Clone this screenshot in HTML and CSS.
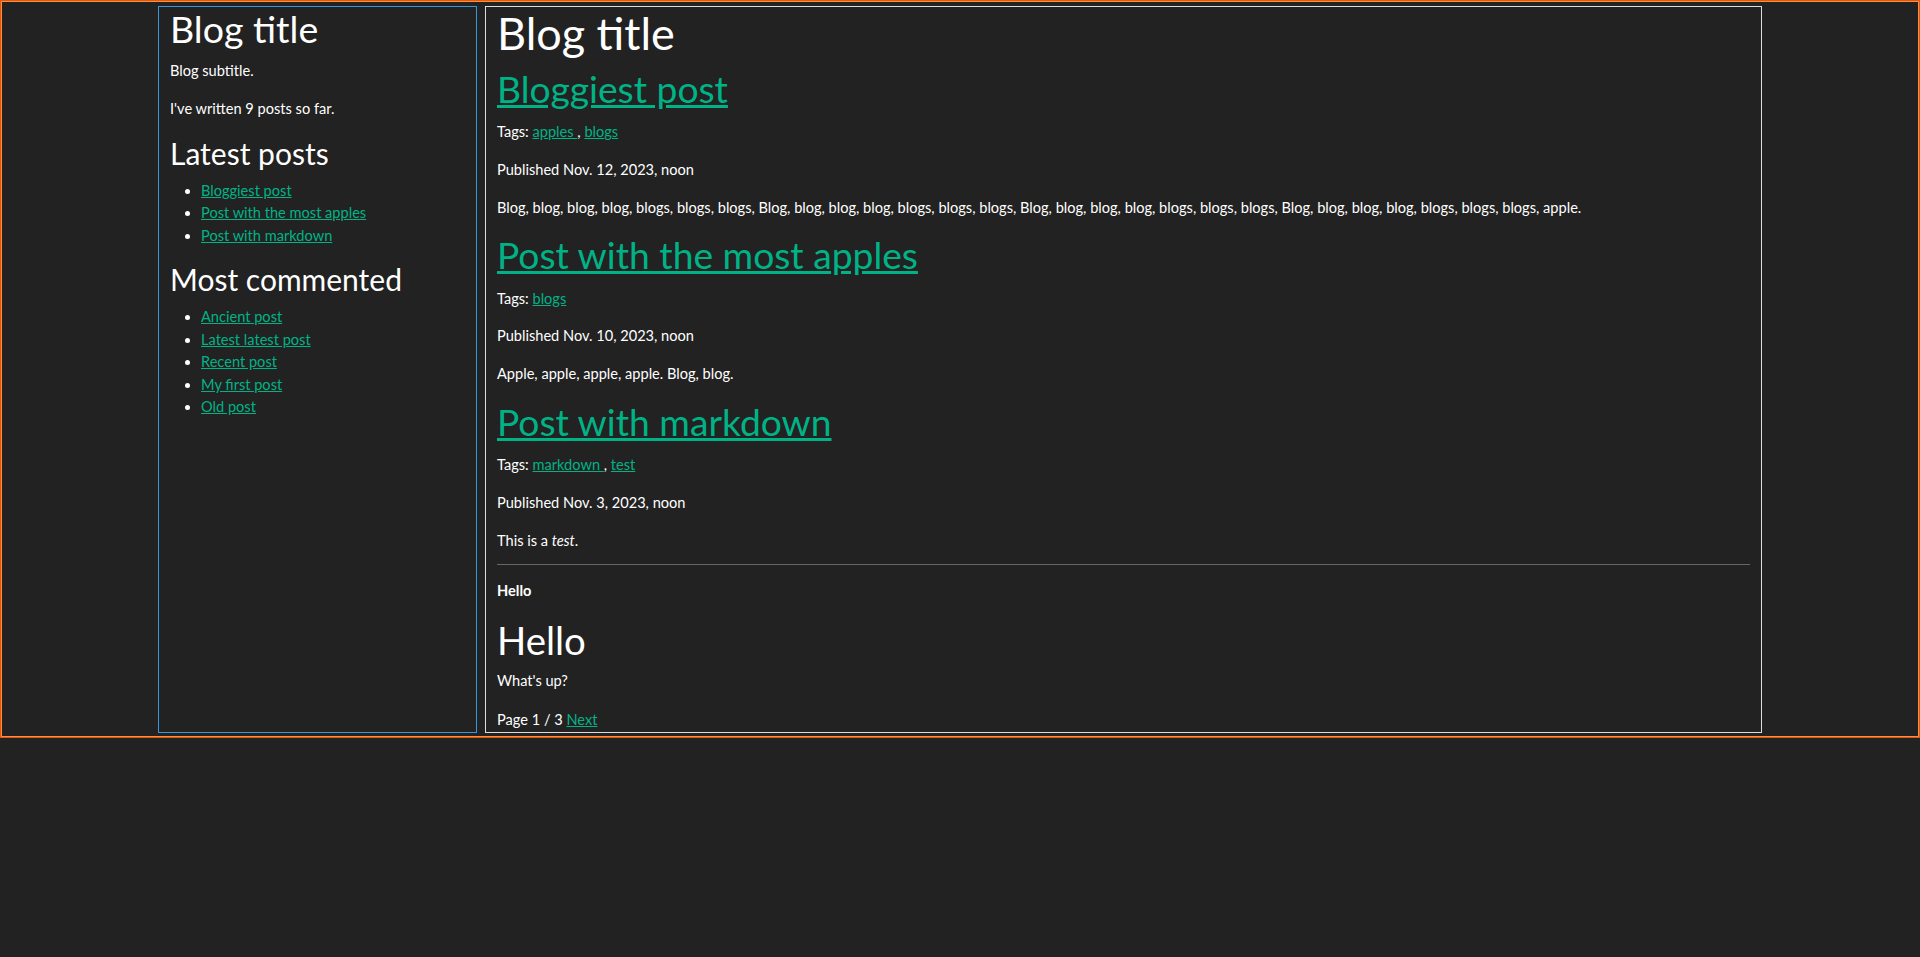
FILE: index.html
```html
<!DOCTYPE html>
<html lang="en">
<head>
<meta charset="utf-8">
<title>Blog title</title>
<link rel="stylesheet" href="styles.css">
</head>
<body>
<div class="page">
  <div class="layout">
    <aside class="sidebar">
      <h1 class="site-title">Blog title</h1>
      <div class="subtitle">Blog subtitle.</div>
      <p>I've written 9 posts so far.</p>
      <h2 class="side-heading">Latest posts</h2>
      <ul class="side-list">
        <li><a href="#">Bloggiest post</a></li>
        <li><a href="#">Post with the most apples</a></li>
        <li><a href="#">Post with markdown</a></li>
      </ul>
      <h2 class="side-heading">Most commented</h2>
      <ul class="side-list">
        <li><a href="#">Ancient post</a></li>
        <li><a href="#">Latest latest post</a></li>
        <li><a href="#">Recent post</a></li>
        <li><a href="#">My first post</a></li>
        <li><a href="#">Old post</a></li>
      </ul>
    </aside>
    <main class="main">
      <h1 class="main-title">Blog title</h1>
      <article class="post">
        <h2 class="post-title"><a href="#">Bloggiest post</a></h2>
        <p>Tags: <a href="#">apples </a>, <a href="#">blogs</a></p>
        <p>Published Nov. 12, 2023, noon</p>
        <p>Blog, blog, blog, blog, blogs, blogs, blogs, Blog, blog, blog, blog, blogs, blogs, blogs, Blog, blog, blog, blog, blogs, blogs, blogs, Blog, blog, blog, blog, blogs, blogs, blogs, apple.</p>
      </article>
      <article class="post">
        <h2 class="post-title"><a href="#">Post with the most apples</a></h2>
        <p>Tags: <a href="#">blogs</a></p>
        <p>Published Nov. 10, 2023, noon</p>
        <p>Apple, apple, apple, apple. Blog, blog.</p>
      </article>
      <article class="post">
        <h2 class="post-title"><a href="#">Post with markdown</a></h2>
        <p>Tags: <a href="#">markdown </a>, <a href="#">test</a></p>
        <p>Published Nov. 3, 2023, noon</p>
        <p>This is a <em>test</em>.</p>
      </article>
      <hr class="divider">
      <p><strong>Hello</strong></p>
      <h1 class="content-title">Hello</h1>
      <p>What's up?</p>
      <p class="pager">Page 1 / 3 <a href="#">Next</a></p>
    </main>
  </div>
</div>
</body>
</html>
```

FILE: styles.css
```css
html, body {
  margin: 0;
  padding: 0;
  background: #222222;
  color: #ffffff;
  font-family: Lato, "Open Sans", "Liberation Sans", sans-serif;
  font-size: 14.6px;
  line-height: 22.4px;
}

a {
  color: #00b386;
}

.page {
  border: 1px solid #e74c3c;
  box-shadow: inset 0 0 0 1px #f39c12;
  padding: 5px 0 4px;
}

.layout {
  display: grid;
  grid-template-columns: 319px 1fr;
  gap: 8px;
  max-width: 1604px;
  margin: 0 auto;
}

.sidebar {
  border: 1px solid #3498db;
  padding: 0 11px;
}

.main {
  border: 1px solid #dddddd;
  padding: 0 11px;
}

p {
  margin: 15.3px 0;
}

h1, h2 {
  font-weight: 400;
}

.site-title {
  font-size: 37.5px;
  line-height: 43px;
  margin: 0;
}

.subtitle {
  margin-top: 9.5px;
}

.sidebar p {
  margin: 15.8px 0;
}

.side-heading {
  font-size: 30px;
  line-height: 34.6px;
  margin: 15.3px 0 9.4px;
}

.side-list {
  margin: 0 0 15.3px;
  padding-left: 31px;
}

.main-title {
  font-size: 45px;
  line-height: 53px;
  margin: 0 0 8px;
}

.post-title {
  font-size: 37.2px;
  line-height: 42.8px;
  margin: 0 0 10.5px;
}

.post-title + p {
  margin-top: 0;
}

.post + .post .post-title {
  margin-top: 15.3px;
}

.post p:last-child {
  margin-bottom: 0;
}

.divider {
  border: 0;
  border-top: 1px solid #666666;
  margin: 11.6px 0 15.3px;
}

.content-title {
  font-size: 38.4px;
  line-height: 44.2px;
  margin: 15.3px 0 8px;
}

.content-title + p {
  margin-top: 0;
}

.pager {
  margin-top: 17px;
}

.main > p:last-child {
  margin-bottom: 0;
}
```
